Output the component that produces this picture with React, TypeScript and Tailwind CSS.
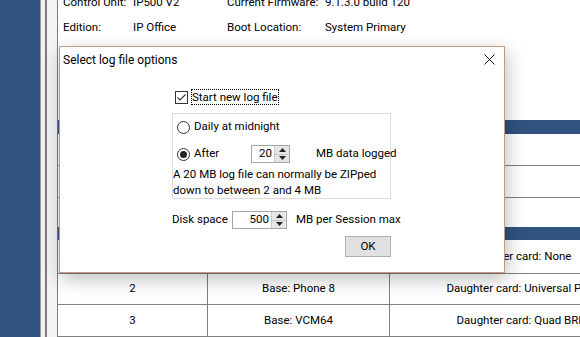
const info = [
  ["Control Unit:", "IP500 V2", "Current Firmware:", "9.1.3.0 build 120"],
  ["Edition:", "IP Office", "Boot Location:", "System Primary"],
]

const rows = [
  { h: "h-[32px]", cells: ["", "", ""] },
  { h: "h-[32px]", cells: ["", "", ""] },
]

const lowerRows = [
  { h: "h-[34px]", cells: ["1", "Base: Phone 8", "Daughter card: None"] },
  { h: "h-[31px]", cells: ["2", "Base: Phone 8", "Daughter card: Universal PRI"] },
  { h: "h-[32px]", cells: ["3", "Base: VCM64", "Daughter card: Quad BRI"] },
]

function TableRow({ h, cells, last }: { h: string; cells: string[]; last?: boolean }) {
  return (
    <div className={`flex shrink-0 ${h} ${last ? "" : "border-b border-[#808080]"}`}>
      <div className="flex w-[150px] shrink-0 items-center justify-center border-r border-[#808080]">{cells[0]}</div>
      <div className="flex w-[182px] shrink-0 items-center justify-center border-r border-[#808080]">{cells[1]}</div>
      <div className="flex w-[258px] shrink-0 items-center justify-center whitespace-nowrap">{cells[2]}</div>
    </div>
  )
}

function Spin({ value, width }: { value: string; width: string }) {
  return (
    <div className={`flex h-[18px] ${width} shrink-0 border border-[#a5a5a5] bg-white`}>
      <div className="flex flex-1 items-center justify-end pr-[2px] leading-none">{value}</div>
      <div className="flex w-[15px] flex-col border-l border-[#c8c8c8]">
        <div className="flex flex-1 items-center justify-center border-b border-[#c8c8c8] bg-[#e6e6e6]">
          <svg width="7" height="4" viewBox="0 0 7 4">
            <path d="M0 4 L3.5 0 L7 4 Z" fill="#222" />
          </svg>
        </div>
        <div className="flex flex-1 items-center justify-center bg-[#e6e6e6]">
          <svg width="7" height="4" viewBox="0 0 7 4">
            <path d="M0 0 L3.5 4 L7 0 Z" fill="#222" />
          </svg>
        </div>
      </div>
    </div>
  )
}

function Radio({ checked }: { checked?: boolean }) {
  return (
    <div className="flex h-[13px] w-[13px] shrink-0 items-center justify-center rounded-full border border-[#333] bg-white">
      {checked && <div className="h-[7px] w-[7px] rounded-full bg-[#222]" />}
    </div>
  )
}

export default function App() {
  return (
    <div className="relative h-[337px] w-[580px] overflow-hidden bg-white font-['Roboto',sans-serif] text-[11.5px] text-black">
      <div className="flex h-full">
        <div className="w-[40px] shrink-0 bg-[#30537f]" />
        <div className="w-px shrink-0 bg-[#9a9a9a]" />
        <div className="w-[4px] shrink-0 bg-[#f2f2f2]" />
        <div className="w-[2px] shrink-0 bg-[#7c7c7c]" />
        <div className="w-[10px] shrink-0 bg-[#f4f4f4]" />
        <div className="w-px shrink-0 bg-[#7c7c7c]" />
        <main className="flex min-w-0 flex-1 flex-col">
          <div className="-mt-[10px] grid h-[130px] shrink-0 grid-cols-[70px_94px_98px_1fr] content-start px-[5px]">
            {info.flat().map((t, i) => (
              <div key={i} className="flex h-[25px] items-center whitespace-nowrap">
                {t}
              </div>
            ))}
          </div>
          <div className="h-[14px] shrink-0 bg-[#30537f]" />
          {rows.map((r, i) => (
            <TableRow key={i} h={r.h} cells={r.cells} />
          ))}
          <div className="h-[29px] shrink-0" />
          <div className="h-[13px] shrink-0 bg-[#30537f]" />
          {lowerRows.map((r, i) => (
            <TableRow key={i} h={r.h} cells={r.cells} />
          ))}
        </main>
      </div>

      {/* dialog */}
      <div className="absolute left-[59px] top-[46px] flex h-[227px] w-[446px] flex-col whitespace-nowrap border border-[#c39a7e] bg-white shadow-[2px_6px_18px_rgba(0,0,0,0.26)]">
        <div className="flex h-[25px] shrink-0 items-center justify-between pl-[3px] pr-[9px] text-[12px]">
          <span>Select log file options</span>
          <svg width="11" height="11" viewBox="0 0 11 11">
            <path d="M0.5 0.5 L10.5 10.5 M10.5 0.5 L0.5 10.5" stroke="#111" strokeWidth="1" />
          </svg>
        </div>
        <div className="ml-[112px] flex w-[219px] flex-col">
          <div className="mt-[17px] flex h-[16px] items-center pl-[3px]">
            <div className="flex h-[13px] w-[13px] items-center justify-center border border-[#333] bg-white">
              <svg width="11" height="11" viewBox="0 0 11 11">
                <path d="M1.5 5.5 L4 8 L9.5 2.5" stroke="#333" strokeWidth="1.1" fill="none" />
              </svg>
            </div>
            <span className="ml-[3px] border border-dotted border-black leading-[14px]">Start new log file</span>
          </div>

          <div className="mt-[8px] flex h-[86px] flex-col border border-[#dcdcdc]">
            <div className="mt-[5px] flex h-[16px] items-center gap-[4px] pl-[4px]">
              <Radio />
              <span>Daily at midnight</span>
            </div>
            <div className="mt-[10px] flex h-[18px] items-center pl-[4px]">
              <Radio checked />
              <span className="ml-[4px] w-[57px] shrink-0">After</span>
              <Spin value="20" width="w-[39px]" />
              <span className="ml-[26px] shrink-0">MB data logged</span>
            </div>
            <p className="mt-[3px] leading-[16px]">
              A 20 MB log file can normally be ZIPped
              <br />
              down to between 2 and 4 MB
            </p>
          </div>

          <div className="mt-[12px] flex h-[18px] items-center">
            <span className="w-[60px] shrink-0">Disk space</span>
            <Spin value="500" width="w-[55px]" />
            <span className="ml-[9px] shrink-0">MB per Session max</span>
          </div>

          <div className="mt-[7px] flex justify-end">
            <button className="flex h-[21px] w-[46px] items-center justify-center border border-[#adadad] bg-[#e1e1e1]">
              OK
            </button>
          </div>
        </div>
      </div>
    </div>
  )
}
